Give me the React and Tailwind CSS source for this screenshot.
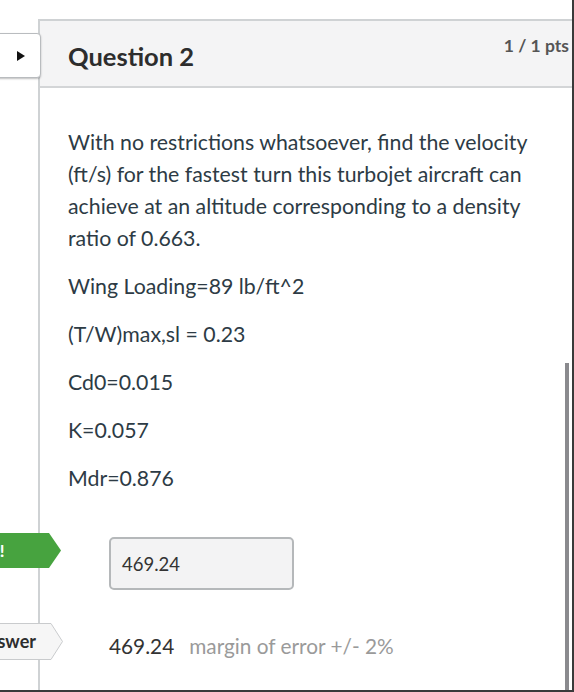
export default function App() {
  return (
    <div
      className="relative w-[574px] h-[692px] overflow-hidden bg-white border-r-2 border-b-2 border-[#3a3a3a]"
      style={{ fontFamily: 'Lato, "Open Sans", sans-serif' }}
    >
      <div className="ml-[38px] mt-[19px] h-[680px] border-l-2 border-t-2 border-[#cfd2d4]">
        {/* Header */}
        <div className="relative flex justify-between h-[67px] bg-[#f4f4f5] border-b-2 border-[#d3d5d7] pl-[28px] pr-[3px]">
          <h2 className="pt-[20px] text-[25.5px] font-bold text-[#2d2d2d] leading-[30px]">Question 2</h2>
          <div className="pt-[15px] text-[17.5px] font-bold text-[#555] leading-[20px]">1 / 1 pts</div>
        </div>

        {/* Body */}
        <div className="pl-[28px] pr-[20px] pt-[38px] text-[21.3px] leading-[32px] text-[#2d3b45]">
          <p className="mb-[16px]">
            With no restrictions whatsoever, find the velocity (ft/s) for the fastest turn this turbojet aircraft can achieve at an altitude corresponding to a density ratio of 0.663.
          </p>
          <p className="mb-[16px]">Wing Loading=89 lb/ft^2</p>
          <p className="mb-[16px]">(T/W)max,sl = 0.23</p>
          <p className="mb-[16px]">Cd0=0.015</p>
          <p className="mb-[16px]">K=0.057</p>
          <p>Mdr=0.876</p>

          <div className="mt-[43px] ml-[41px] w-[185px] h-[53px] flex items-center px-[11px] bg-[#f3f3f4] border-2 border-[#b5b8ba] rounded-[5px] text-[18.5px] text-[#333]">
            469.24
          </div>

          <div className="mt-[40px] ml-[41px] flex items-center gap-[15px] text-[20.8px]">
            <span className="text-[#333]">469.24</span>
            <span className="text-[#9a9a9a]">margin of error +/- 2%</span>
          </div>
        </div>
      </div>

      {/* Collapse tab */}
      <div className="absolute left-[-6px] top-[33px] w-[47px] h-[45px] flex items-center justify-center pl-[6px] bg-white border border-[#b9bcbf] rounded-[4px] shadow-[0_1px_2px_rgba(0,0,0,0.25)]">
        <svg width="9" height="10" viewBox="0 0 9 10"><path d="M1 0 L9 5 L1 10 Z" fill="#111" /></svg>
      </div>

      {/* Correct tag */}
      <div className="absolute left-0 top-[533px] flex h-[35px]">
        <div className="w-[48px] bg-[#47a33f] flex items-center text-white font-bold text-[17px] whitespace-nowrap">
          <span className="-ml-[57px]">Correct!</span>
        </div>
        <svg width="13" height="35" viewBox="0 0 13 35" className="block">
          <path d="M0 0 L1 0 L13 17.5 L1 35 L0 35 Z" fill="#47a33f" />
        </svg>
      </div>

      {/* Correct answer tag */}
      <div className="absolute left-0 top-[623px] flex h-[37px]">
        <div className="w-[50px] bg-[#f6f6f6] border-y border-[#c9cbcd] flex items-center justify-end pr-[14px] text-[18px] font-bold text-[#2d2d2d] overflow-hidden whitespace-nowrap">
          Correct Answer
        </div>
        <svg width="13" height="37" viewBox="0 0 13 37" className="block">
          <path d="M0 0.5 L1 0.5 L12.5 18.5 L1 36.5 L0 36.5" fill="#f6f6f6" stroke="#c9cbcd" strokeWidth="1" />
        </svg>
      </div>

      {/* Scrollbar */}
      <div className="absolute left-[565px] top-[363px] w-[4px] h-[340px] bg-[#8a8a8e]" />
    </div>
  )
}
